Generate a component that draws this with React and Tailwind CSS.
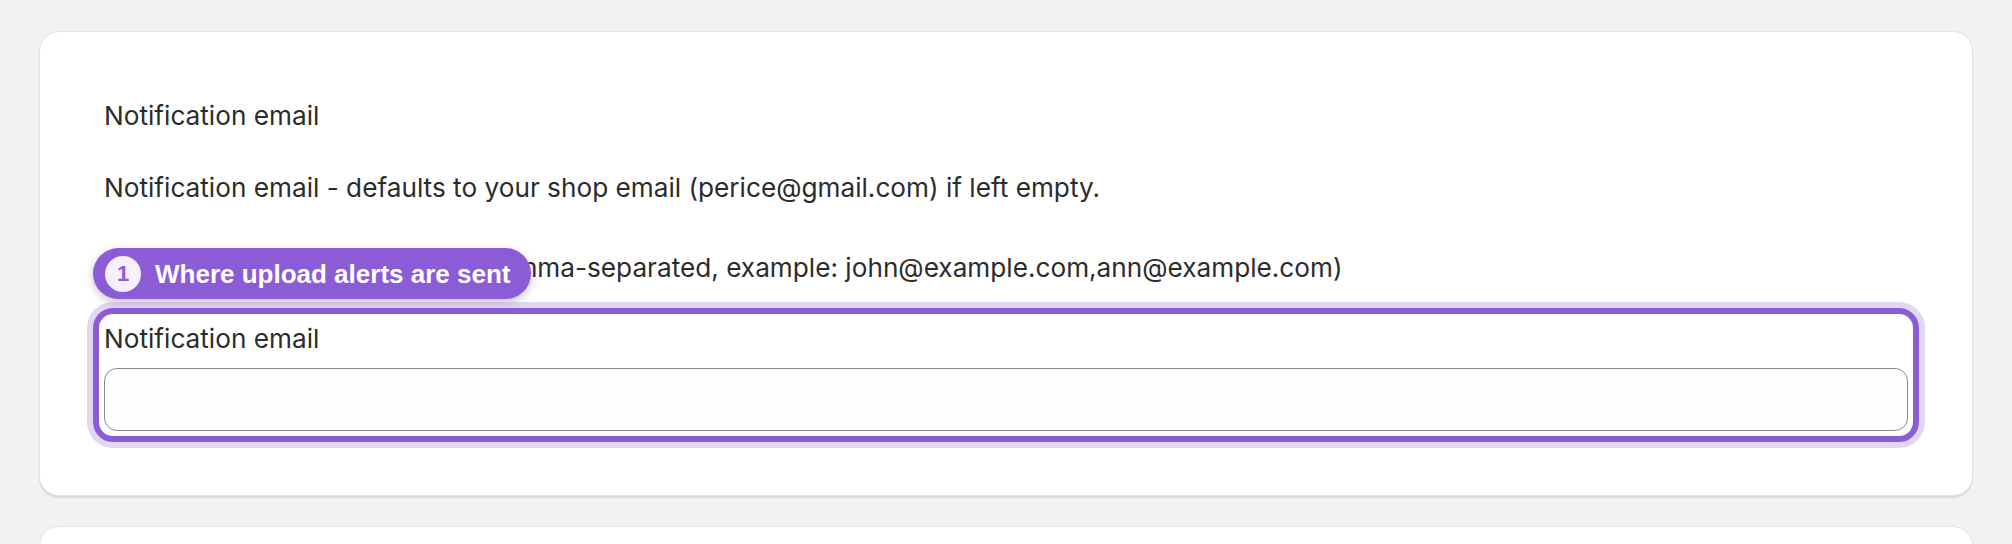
import React from 'react';

const Badge = ({ step, label }) => (
  <div className="absolute -top-[66px] -left-[6px] flex h-[51px] items-center gap-[14px] rounded-full bg-[#8b5cd6] pl-[12px] pr-[21px] shadow-[0_3px_8px_rgba(40,20,80,0.25)] font-['Liberation_Sans',Arial,sans-serif]">
    <span className="flex h-[36px] w-[36px] items-center justify-center rounded-full bg-[#f5f0fd] text-[22px] font-bold text-[#8b5cd6]">
      {step}
    </span>
    <span className="text-[26px] font-bold leading-none text-white">{label}</span>
  </div>
);

export default function App() {
  return (
    <div className="min-h-screen bg-[#f1f2f4] px-[39px] pt-[31px] font-['Inter',sans-serif] text-[26.2px] leading-[39px] text-[#2c2c2c]">
      <div className="flex flex-col gap-[30px]">
        {/* Settings card */}
        <div className="rounded-[20px] border border-[#e3e3e3] bg-white p-[64px] shadow-[0_2px_1px_rgba(0,0,0,0.1)]">
          <p>Notification email</p>
          <p className="mt-[33px]">
            Notification email - defaults to your shop email (perice@gmail.com) if left empty.
          </p>
          <p className="mt-[41px]">
            You can enter multiple emails (comma-separated, example: john@example.com,ann@example.com)
          </p>

          {/* Highlighted field */}
          <div className="relative -mx-[11px] mt-[21px] -mb-[11px] rounded-[20px] border-[6px] border-[#8b5cd6] p-[5px] shadow-[0_0_0_6px_#e2d6f5]">
            <Badge step="1" label="Where upload alerts are sent" />
            <label className="block">Notification email</label>
            <input
              type="email"
              className="mt-[10px] block h-[63px] w-full rounded-[13px] border border-[#8a8a8a] bg-[#fdfdfd] px-4 outline-none"
            />
          </div>
        </div>

        <div className="h-[200px] rounded-[20px] border border-[#e3e3e3] bg-white" />
      </div>
    </div>
  );
}
